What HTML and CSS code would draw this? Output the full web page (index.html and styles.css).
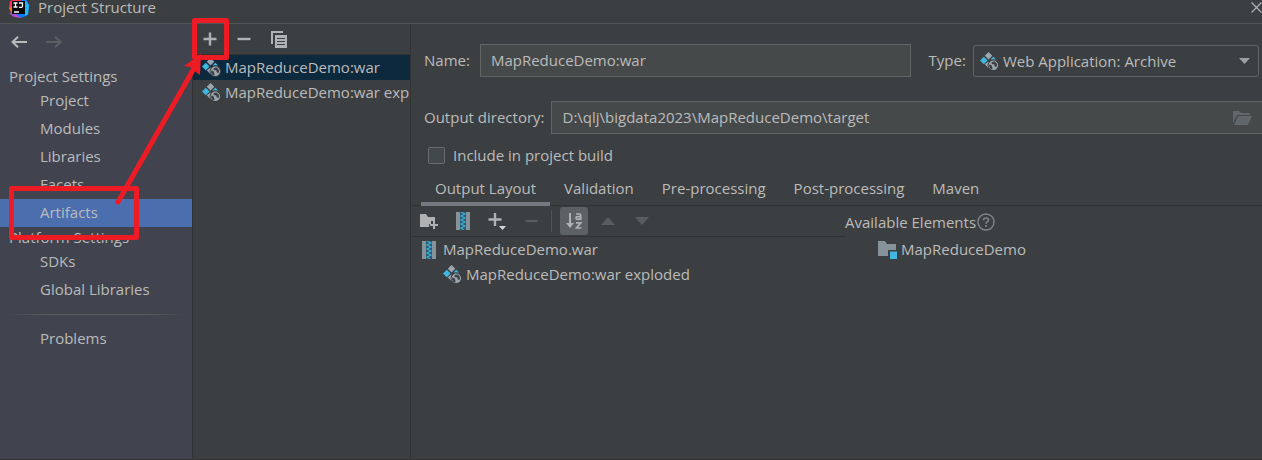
FILE: index.html
```html
<!DOCTYPE html>
<html lang="en">
<head>
<meta charset="utf-8">
<title>Project Structure</title>
<link rel="stylesheet" href="styles.css">
</head>
<body>
<svg class="defs" aria-hidden="true">
  <symbol id="artifact" viewBox="0 0 20 20">
    <path fill="#9aa7b0" d="M9 0l4 4-4 4-4-4zM9 10l3 3-3 4-4-4z"/>
    <path fill="#40b6e0" d="M4 5l4 4-4 4-4-4zM14 5l3 3h-6z"/>
    <circle cx="14" cy="14" r="6" fill="#3c3f41"/>
    <circle cx="14" cy="14" r="5" fill="#9aa7b0"/>
    <path fill="#3c3f41" d="M10 13l2 1 1 2v2.500l-2-1-1.500-2.500zM12.500 10.500l3-.5 2 2 .5 2-1 2-1.500-1-.5-2h-2l-1-1z"/>
  </symbol>
  <symbol id="archive" viewBox="0 0 14 18">
    <path fill="#87939a" d="M0 0h4v18H0zM10 0h4v18h-4z"/>
    <path fill="#2b5a6d" d="M4 0h6v18H4z"/>
    <path fill="none" stroke="#40b6e0" stroke-width="1.100" d="M5 0l4 2-4 2 4 2-4 2 4 2-4 2 4 2-4 2 3 2"/>
  </symbol>
  <symbol id="plus" viewBox="0 0 14 14"><path fill="none" stroke="#afb1b3" stroke-width="2.400" d="M7 .500v13M.5 7h13"/></symbol>
  <symbol id="minus" viewBox="0 0 14 14"><path stroke="currentColor" stroke-width="2.400" d="M.5 7h13"/></symbol>
</svg>

<div class="window">
  <header class="titlebar">
    <svg class="logo" viewBox="0 0 20 20" aria-hidden="true">
      <path fill="#087cfa" d="M7 1h10l3 6-1 10-7 3-8-4z"/>
      <path fill="#fe315d" d="M1 3l9-3 4 5-9 8-5-3z"/>
      <path fill="#f97a12" d="M0 10l6-2 1 8-3 2z"/>
      <path fill="#b14bd8" d="M0 15l5-1 7 6-7-1z"/>
      <path fill="#20b8f6" d="M16 2l4 5-1 9-3 2z"/>
      <path fill="#080808" d="M3 3h13v13H3z"/>
      <path fill="none" stroke="#fff" stroke-width="1.300" d="M4.500 5h4M6.500 5v4M4.500 9h4M10 5h3.500v3q0 1.300-1.300 1.300H10M5 14h5"/>
    </svg>
    <h1 class="title">Project Structure</h1>
    <button class="icon-button close" aria-label="Close">
      <svg width="11" height="11" viewBox="0 0 11 11"><path stroke="#afb1b3" stroke-width="1.200" d="M.5.5l10 10M10.500.5l-10 10"/></svg>
    </button>
  </header>

  <div class="body">
    <nav class="sidebar">
      <div class="history">
        <button class="icon-button" aria-label="Back"><svg width="16" height="12" viewBox="0 0 16 12"><path fill="none" stroke="#bbb" stroke-width="2" d="M16 6H1.500M7 .800L1.500 6 7 11.200"/></svg></button>
        <button class="icon-button" aria-label="Forward" disabled><svg width="16" height="12" viewBox="0 0 16 12"><path fill="none" stroke="#5d5f64" stroke-width="2" d="M0 6h14.500M9 .800L14.500 6 9 11.200"/></svg></button>
      </div>
      <h2 class="group">Project Settings</h2>
      <a class="nav-item" href="#project">Project</a>
      <a class="nav-item" href="#modules">Modules</a>
      <a class="nav-item" href="#libraries">Libraries</a>
      <a class="nav-item" href="#facets">Facets</a>
      <a class="nav-item selected" href="#artifacts" aria-current="page">Artifacts</a>
      <h2 class="group">Platform Settings</h2>
      <a class="nav-item" href="#sdks">SDKs</a>
      <a class="nav-item" href="#global">Global Libraries</a>
      <hr class="divider">
      <a class="nav-item" href="#problems">Problems</a>
    </nav>

    <section class="artifacts" aria-label="Artifacts">
      <div class="list-tools">
        <button class="icon-button" aria-label="Add"><svg width="14" height="14"><use href="#plus"/></svg></button>
        <button class="icon-button" aria-label="Remove"><svg width="14" height="14"><use href="#minus"/></svg></button>
        <button class="icon-button" aria-label="Copy"><svg width="16" height="17" viewBox="0 0 16 17"><path fill="#afb1b3" d="M0 0h12v2H2v11H0z"/><path fill="#afb1b3" fill-rule="evenodd" d="M4 4h12v13H4zM6 7h8v1H6zM6 10h8v1H6zM6 13h8v1H6z"/></svg></button>
      </div>
      <ul class="list">
        <li class="list-row selected-row"><svg class="artifact-icon"><use href="#artifact"/></svg><span>MapReduceDemo:war</span></li>
        <li class="list-row"><svg class="artifact-icon"><use href="#artifact"/></svg><span>MapReduceDemo:war exploded</span></li>
      </ul>
    </section>

    <main class="editor">
      <div class="form-row">
        <label for="name">Name:</label>
        <input class="field name-field" id="name" type="text" value="MapReduceDemo:war">
        <label class="type-label" for="type">Type:</label>
        <div class="select-wrap">
          <svg class="artifact-icon select-icon"><use href="#artifact"/></svg>
          <select class="type-select" id="type"><option>Web Application: Archive</option></select>
          <svg class="select-arrow" viewBox="0 0 11 6"><path fill="#9da0a3" d="M0 0h11L5.500 6z"/></svg>
        </div>
      </div>
      <div class="form-row directory-row">
        <label for="dir">Output directory:</label>
        <div class="directory">
          <input class="directory-input" id="dir" type="text" value="D:\qlj\bigdata2023\MapReduceDemo\target">
          <button class="icon-button" aria-label="Browse"><svg width="19" height="14" viewBox="0 0 19 14"><path fill="#5f676b" d="M0 0h6l2 2h9v2H4L0 12zM5 5h14l-4 9H1z"/></svg></button>
        </div>
      </div>
      <div class="check-row">
        <input class="check" id="include" type="checkbox">
        <label for="include">Include in project build</label>
      </div>

      <div class="tabs" role="tablist">
        <button class="tab active" role="tab" aria-selected="true">Output Layout</button>
        <button class="tab" role="tab">Validation</button>
        <button class="tab" role="tab">Pre-processing</button>
        <button class="tab" role="tab">Post-processing</button>
        <button class="tab" role="tab">Maven</button>
      </div>

      <div class="panes">
        <section class="layout-pane">
          <div class="layout-tools">
            <button class="icon-button tool" aria-label="New folder"><svg width="18" height="16" viewBox="0 0 18 16"><path fill="#afb1b3" d="M0 1h6l2 3h7v4h-4v3H9v3H0z"/><path stroke="#afb1b3" stroke-width="2" d="M14 8v8M10 12h8"/></svg></button>
            <button class="icon-button tool" aria-label="New archive"><svg width="14" height="18"><use href="#archive"/></svg></button>
            <button class="icon-button tool" aria-label="Add copy"><svg width="18" height="18" viewBox="0 0 18 18"><path stroke="#afb1b3" stroke-width="2.400" d="M7 1v13M.5 7.500h13"/><path fill="#d5d6d7" d="M11 14h7l-3.500 4z"/></svg></button>
            <button class="icon-button tool" aria-label="Remove element" disabled><svg width="13" height="14"><use href="#minus"/></svg></button>
            <span class="tool-divider"></span>
            <button class="icon-button sort" aria-label="Sort by name"><svg width="18" height="18" viewBox="0 0 18 18"><path fill="#afb1b3" d="M4 1h2v10h3l-4 5-4-5h3z"/><path fill="none" stroke="#afb1b3" stroke-width="1.700" d="M11 2h3.200q1.500 0 1.500 1.500V8M15.500 4.600H13q-2 0-2 1.400T13 7.200h2.500M11 10.800h4.800L11.500 16H16.500"/></svg></button>
            <button class="icon-button tool" aria-label="Move up" disabled><svg width="14" height="8" viewBox="0 0 14 8"><path fill="currentColor" d="M0 8h14L7 0z"/></svg></button>
            <button class="icon-button tool" aria-label="Move down" disabled><svg width="14" height="8" viewBox="0 0 14 8"><path fill="currentColor" d="M0 0h14L7 8z"/></svg></button>
          </div>
          <ul class="list">
            <li class="tree-row"><svg class="archive-icon"><use href="#archive"/></svg><span>MapReduceDemo.war</span></li>
            <li class="tree-row child"><svg class="artifact-icon"><use href="#artifact"/></svg><span>MapReduceDemo:war exploded</span></li>
          </ul>
        </section>
        <section class="available-pane">
          <div class="available-head">
            <h2 class="available-title">Available Elements</h2>
            <button class="icon-button" aria-label="Help"><svg width="18" height="18" viewBox="0 0 18 18"><circle cx="9" cy="9" r="8" fill="none" stroke="#7f8488" stroke-width="1.400"/><path fill="none" stroke="#7f8488" stroke-width="1.700" d="M6.500 7.200Q6.500 5 9 5t2.500 2Q11.500 8.200 10 9 9 9.500 9 10.800M9 12v2"/></svg></button>
          </div>
          <ul class="list">
            <li class="tree-row available-row"><svg class="module-icon" viewBox="0 0 19 18"><path fill="#87939a" d="M0 0h7l2 3h9v6h-8v6H0z"/><path fill="#40b6e0" d="M12 10.500h7V18h-7z"/></svg><span>MapReduceDemo</span></li>
          </ul>
        </section>
      </div>
    </main>
  </div>
</div>

<svg class="annotation" width="240" height="250" viewBox="0 0 240 250" aria-hidden="true">
  <g fill="none" stroke="#ed1c24" stroke-width="5" stroke-linejoin="round">
    <rect x="194.500" y="20.500" width="32" height="37"/>
    <rect x="11.500" y="188.500" width="125" height="49"/>
    <path stroke-linecap="round" d="M118 202L193 70"/>
  </g>
  <path fill="#ed1c24" d="M201 54l-17 12 6 1 6 5 4 3z"/>
</svg>
</body>
</html>
```
FILE: styles.css
```css
* { box-sizing: border-box; }

body {
  margin: 0;
  background: #3c3f41;
  color: #bbbbbb;
  font: 15px/20px "Open Sans", "Noto Sans", sans-serif;
}

h1, h2 { margin: 0; font: inherit; }
button, input, select { font: inherit; color: inherit; }
svg { display: block; flex: none; }

.defs { display: none; }

.window {
  display: flex;
  flex-direction: column;
  min-height: 100vh;
  border-bottom: 1px solid #323232;
}

.titlebar {
  display: flex;
  align-items: center;
  height: 24px;
  padding: 0 0 8px 9px;
  border-bottom: 1px solid #515456;
}
.logo { width: 20px; height: 20px; }
.title { margin-left: 9px; line-height: 15px; }

.icon-button {
  display: flex;
  align-items: center;
  justify-content: center;
  flex: none;
  padding: 0;
  border: 0;
  background: none;
}
.icon-button:disabled { color: #5a5c5e; }
.close { margin-left: auto; }

.body { display: flex; flex: 1; }

.sidebar {
  flex: none;
  width: 193px;
  background: #41444e;
  border-right: 1px solid #323232;
}
.history {
  display: flex;
  align-items: center;
  gap: 19px;
  height: 36px;
  margin-bottom: 6px;
  padding-left: 11px;
}
.group { padding-left: 9px; line-height: 21px; }
.nav-item {
  display: block;
  height: 28px;
  padding-left: 40px;
  line-height: 26px;
  color: inherit;
  text-decoration: none;
}
.selected { background: #4b6eaf; }
.divider {
  height: 1px;
  margin: 10px 8px;
  border: 0;
  background: linear-gradient(90deg, transparent, #5b5b5d 20%, #5b5b5d 80%, transparent);
}

.artifacts {
  flex: none;
  width: 218px;
  border-right: 1px solid #323232;
}
.list-tools {
  display: flex;
  align-items: center;
  gap: 20px;
  height: 31px;
  padding-left: 10px;
  border-bottom: 1px solid #323232;
  color: #afb1b3;
}
.list { margin: 0; padding: 0; list-style: none; }
.list span { padding-bottom: 2px; }
.list-row {
  display: flex;
  align-items: center;
  gap: 4px;
  height: 25px;
  padding-left: 9px;
  overflow: hidden;
  white-space: nowrap;
}
.selected-row { background: #0d293e; }
.artifact-icon { width: 19px; height: 19px; }

.editor { flex: 1; min-width: 0; }
.form-row {
  display: flex;
  align-items: center;
  gap: 10px;
  margin-top: 20px;
  padding: 0 3px 0 13px;
}
.directory-row { gap: 6px; margin-top: 24px; padding-right: 0; }
.field {
  height: 33px;
  padding: 0 10px 2px;
  border: 1px solid #646464;
  background: #45494a;
}
.name-field { flex: 10; min-width: 0; }
.form-row label { padding-bottom: 2px; }
.type-label { margin: 0 -3px 0 8px; }
.select-wrap { position: relative; flex: 7; min-width: 0; }
.type-select {
  display: block;
  width: 100%;
  height: 32px;
  padding: 0 30px 0 29px;
  border: 1px solid #646464;
  border-radius: 3px;
  background: #3c3f41;
  appearance: none;
}
.select-icon { position: absolute; top: 7px; left: 7px; }
.select-arrow { position: absolute; top: 13px; right: 9px; width: 11px; height: 6px; }

.directory {
  display: flex;
  align-items: center;
  flex: 1;
  height: 33px;
  padding-right: 10px;
  border: 1px solid #646464;
  border-right: 0;
  background: #45494a;
}
.directory-input {
  flex: 1;
  min-width: 0;
  padding: 0 11px 2px;
  border: 0;
  background: none;
}

.check-row {
  display: flex;
  align-items: center;
  gap: 8px;
  margin-top: 11px;
  padding-left: 17px;
}
.check {
  width: 17px;
  height: 17px;
  margin: 0;
  border: 1px solid #6b6b6b;
  border-radius: 2px;
  background: #43494a;
  appearance: none;
}

.tabs {
  display: flex;
  height: 35px;
  margin-top: 6px;
  padding-left: 10px;
  border-bottom: 1px solid #323232;
}
.tab {
  height: 35px;
  padding: 5px 14px 2px;
  border: 0;
  border-bottom: 4px solid transparent;
  background: none;
}
.active { border-bottom-color: #747a80; }

.panes { display: flex; }
.layout-pane { flex: 51; min-width: 0; }
.available-pane { flex: 49; min-width: 0; }
.layout-tools {
  display: flex;
  align-items: center;
  height: 31px;
  padding-left: 1px;
  border-bottom: 1px solid #323232;
}
.tool { width: 34px; height: 28px; }
.tool-divider { width: 1px; height: 22px; margin: 0 8px 0 3px; background: #515456; }
.sort {
  width: 28px;
  height: 28px;
  margin-right: 3px;
  border-radius: 3px;
  background: #5c6164;
}
.tree-row {
  display: flex;
  align-items: center;
  gap: 7px;
  height: 25px;
  padding-left: 11px;
}
.archive-icon { width: 14px; height: 18px; }
.child { gap: 4px; padding-left: 32px; }
.available-head {
  display: flex;
  align-items: center;
  gap: 1px;
  height: 31px;
}
.available-row { gap: 4px; padding-left: 33px; }
.module-icon { width: 19px; height: 18px; }

.annotation { position: absolute; top: 0; left: 0; pointer-events: none; }
```
